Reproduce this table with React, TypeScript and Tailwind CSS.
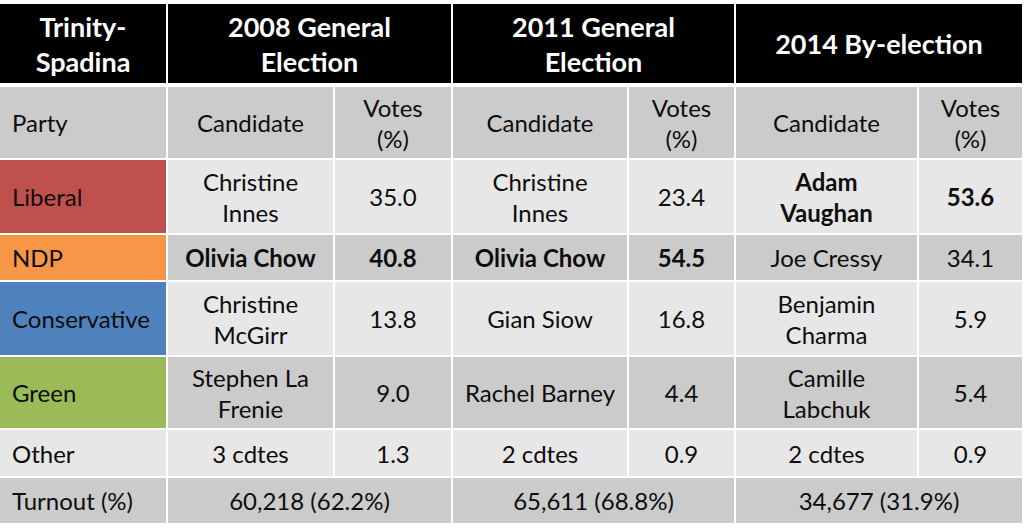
import React from "react";

// Trinity-Spadina results table, PowerPoint "Medium Style 2" look
const DARK = "bg-[#cbcbcb]";
const LIGHT = "bg-[#e7e7e7]";

type Cell = { text: string[]; bold?: boolean };
type Row = {
  party: string;
  partyBg: string;
  rowBg: string;
  cells: Cell[];
};

const rows: Row[] = [
  {
    party: "Liberal",
    partyBg: "bg-[#c0504d]",
    rowBg: LIGHT,
    cells: [
      { text: ["Christine", "Innes"] },
      { text: ["35.0"] },
      { text: ["Christine", "Innes"] },
      { text: ["23.4"] },
      { text: ["Adam", "Vaughan"], bold: true },
      { text: ["53.6"], bold: true },
    ],
  },
  {
    party: "NDP",
    partyBg: "bg-[#f79646]",
    rowBg: DARK,
    cells: [
      { text: ["Olivia Chow"], bold: true },
      { text: ["40.8"], bold: true },
      { text: ["Olivia Chow"], bold: true },
      { text: ["54.5"], bold: true },
      { text: ["Joe Cressy"] },
      { text: ["34.1"] },
    ],
  },
  {
    party: "Conservative",
    partyBg: "bg-[#4f81bd]",
    rowBg: LIGHT,
    cells: [
      { text: ["Christine", "McGirr"] },
      { text: ["13.8"] },
      { text: ["Gian Siow"] },
      { text: ["16.8"] },
      { text: ["Benjamin", "Charma"] },
      { text: ["5.9"] },
    ],
  },
  {
    party: "Green",
    partyBg: "bg-[#9bbb59]",
    rowBg: DARK,
    cells: [
      { text: ["Stephen La", "Frenie"] },
      { text: ["9.0"] },
      { text: ["Rachel Barney"] },
      { text: ["4.4"] },
      { text: ["Camille", "Labchuk"] },
      { text: ["5.4"] },
    ],
  },
  {
    party: "Other",
    partyBg: LIGHT,
    rowBg: LIGHT,
    cells: [
      { text: ["3 cdtes"] },
      { text: ["1.3"] },
      { text: ["2 cdtes"] },
      { text: ["0.9"] },
      { text: ["2 cdtes"] },
      { text: ["0.9"] },
    ],
  },
];

const elections = [
  ["2008 General", "Election"],
  ["2011 General", "Election"],
  ["2014 By-election"],
];

const turnout = ["60,218 (62.2%)", "65,611 (68.8%)", "34,677 (31.9%)"];

const Lines = ({ lines }: { lines: string[] }) => (
  <div>
    {lines.map((l, i) => (
      <div key={i}>{l}</div>
    ))}
  </div>
);

export default function App() {
  return (
    <div className="w-[1024px] h-[532px] bg-white pt-[4px] font-['Lato','Open_Sans',sans-serif] text-[24px] leading-[31px] text-[#0d0d0d]">
      <div className="grid w-[1022px] grid-cols-[166px_165px_116px_174px_105px_181px_103px] grid-rows-[81px_71px_73px_45px_73px_71px_46px_45px] gap-[2px]">
        {/* header */}
        <div className="h-[79px] bg-black text-white font-bold text-[27px] leading-[35px] flex items-center justify-center text-center">
          <Lines lines={["Trinity-", "Spadina"]} />
        </div>
        {elections.map((e, i) => (
          <div
            key={i}
            className="col-span-2 h-[79px] bg-black text-white font-bold text-[27px] leading-[35px] flex items-center justify-center text-center"
          >
            <Lines lines={e} />
          </div>
        ))}

        {/* column labels */}
        <div className={`${DARK} flex items-center pl-[12px]`}>Party</div>
        {[0, 1, 2].map((i) => (
          <React.Fragment key={i}>
            <div className={`${DARK} flex items-center justify-center`}>Candidate</div>
            <div className={`${DARK} flex items-center justify-center text-center`}>
              <Lines lines={["Votes", "(%)"]} />
            </div>
          </React.Fragment>
        ))}

        {/* party rows */}
        {rows.map((r) => (
          <React.Fragment key={r.party}>
            <div className={`${r.partyBg} flex items-center pl-[12px]`}>{r.party}</div>
            {r.cells.map((c, j) => (
              <div
                key={j}
                className={`${r.rowBg} flex items-center justify-center text-center ${c.bold ? "font-bold" : ""}`}
              >
                <Lines lines={c.text} />
              </div>
            ))}
          </React.Fragment>
        ))}

        {/* turnout */}
        <div className={`${DARK} flex items-center pl-[12px]`}>Turnout (%)</div>
        {turnout.map((t) => (
          <div key={t} className={`${DARK} col-span-2 flex items-center justify-center`}>
            {t}
          </div>
        ))}
      </div>
    </div>
  );
}
